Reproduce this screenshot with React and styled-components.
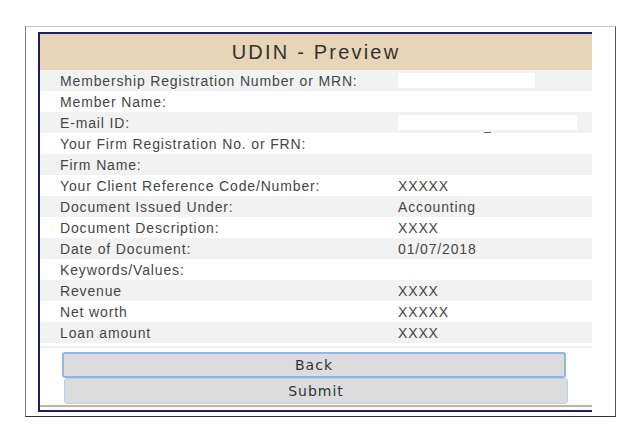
import React from "react";
import styled, { createGlobalStyle } from "styled-components";

const GlobalStyle = createGlobalStyle`
  html, body {
    margin: 0;
    padding: 0;
    background: #ffffff;
  }
  body {
    font-family: "Liberation Sans", Arial, sans-serif;
  }
`;

const Page = styled.div`
  padding: 26px 0 0 25px;
`;

const Frame = styled.div`
  width: 577px;
  height: 384px;
  border-top: 1px solid #c4c4c4;
  border-left: 1px solid #7a7a7a;
  border-right: 1px solid #555555;
  border-bottom: 1px solid #333333;
  padding: 5px 0 0 12px;
`;

const Panel = styled.div`
  width: 552px;
  border-top: 2px solid #1c2060;
  border-left: 2px solid #1c2060;
  display: flex;
  flex-direction: column;
`;

const Header = styled.div`
  height: 36px;
  background: #e6d6b7;
  display: flex;
  align-items: center;
  justify-content: center;
  font-size: 20px;
  letter-spacing: 2.2px;
  color: #333333;
`;

const Rows = styled.div`
  display: flex;
  flex-direction: column;
`;

const Row = styled.div`
  display: grid;
  grid-template-columns: 338px 1fr;
  align-items: center;
  height: 21px;
  padding-left: 20px;
  background: ${({ $shaded }) => ($shaded ? "#f2f2f3" : "#ffffff")};
  font-size: 14px;
  letter-spacing: 0.85px;
  color: #454545;
`;

const Value = styled.span`
  white-space: nowrap;
`;

const Blank = styled.span`
  display: block;
  position: relative;
  height: 15px;
  width: ${({ $w }) => $w}px;
  background: #ffffff;
`;

const Dash = styled.span`
  position: absolute;
  left: 86px;
  bottom: -3px;
  width: 7px;
  height: 1px;
  background: #666666;
`;

const Rule = styled.div`
  height: 2px;
  margin-top: 3px;
  background: #eeeeee;
`;

const Buttons = styled.div`
  display: flex;
  flex-direction: column;
  padding: 4px 0 0 22px;
`;

const Button = styled.button`
  box-sizing: border-box;
  width: 504px;
  height: 26px;
  margin-left: ${({ $shift }) => $shift}px;
  border: ${({ $focus }) => ($focus ? "2px solid #92b6e0" : "1px solid #b9d0ea")};
  border-radius: 3px;
  background: #dcdcdc;
  font-family: "DejaVu Sans", Verdana, sans-serif;
  font-size: 14px;
  letter-spacing: 1px;
  color: #333333;
  padding: 0;
`;

const Footer = styled.div`
  margin-top: 1px;
  border-top: 2px solid #cdb391;
  height: 3px;
  border-bottom: 2px solid #1c2060;
`;

const rows = [
  ["Membership Registration Number or MRN:", { blank: 137 }],
  ["Member Name:", ""],
  ["E-mail ID:", { blank: 179, dash: true }],
  ["Your Firm Registration No. or FRN:", ""],
  ["Firm Name:", ""],
  ["Your Client Reference Code/Number:", "XXXXX"],
  ["Document Issued Under:", "Accounting"],
  ["Document Description:", "XXXX"],
  ["Date of Document:", "01/07/2018"],
  ["Keywords/Values:", ""],
  ["Revenue", "XXXX"],
  ["Net worth", "XXXXX"],
  ["Loan amount", "XXXX"],
];

export default function App() {
  return (
    <>
      <GlobalStyle />
      <Page>
        <Frame>
          <Panel>
            <Header>UDIN - Preview</Header>
            <Rows>
              {rows.map(([label, value], i) => (
                <Row key={label} $shaded={i % 2 === 0}>
                  <span>{label}</span>
                  {typeof value === "string" ? (
                    <Value>{value}</Value>
                  ) : (
                    <Blank $w={value.blank}>{value.dash && <Dash />}</Blank>
                  )}
                </Row>
              ))}
            </Rows>
            <Rule />
            <Buttons>
              <Button $focus $shift={0}>Back</Button>
              <Button $shift={2}>Submit</Button>
            </Buttons>
            <Footer />
          </Panel>
        </Frame>
      </Page>
    </>
  );
}
